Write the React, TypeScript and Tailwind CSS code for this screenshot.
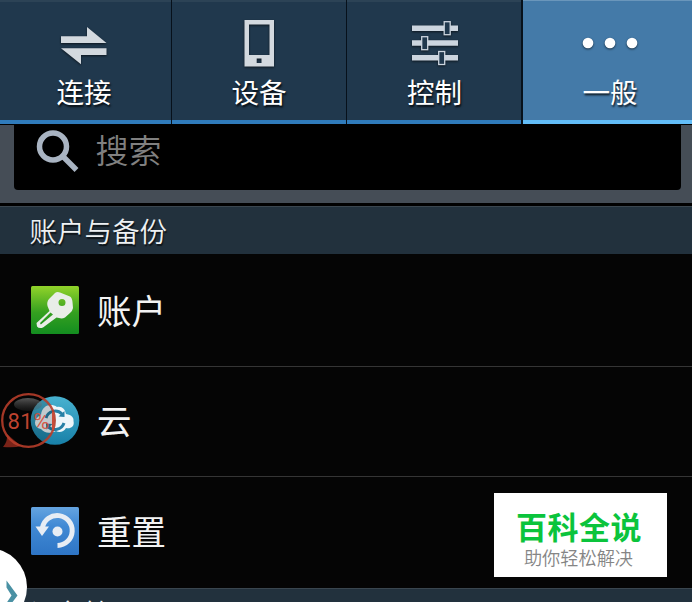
import type { ReactNode } from "react";

const tabShadow = "[filter:drop-shadow(0_1px_1px_rgba(0,0,0,0.6))]";

function ConnectIcon() {
  return (
    <svg width="48" height="48" viewBox="0 0 48 48" className={tabShadow} fill="#d3d9df">
      <path d="M1 16.300H27V7L46.500 23H1Z" />
      <path d="M46.500 28.300H1L21 44.300V35H46.500Z" />
    </svg>
  );
}

function DeviceIcon() {
  return (
    <svg width="48" height="48" viewBox="0 0 48 48" className={tabShadow} fill="#d3d9df">
      <path fillRule="evenodd" d="M9.500 0H39V46.500H9.500ZM14 4.500V35H34.500V4.500ZM21.700 38.500V43H26.500V38.500Z" />
    </svg>
  );
}

function ControlIcon() {
  return (
    <svg width="48" height="48" viewBox="0 0 48 48" className={tabShadow}>
      <path d="M1 5.500H47V11H1ZM1 20.300H47V25.800H1ZM1 35H47V40.500H1Z" fill="#ccd5df" />
      <g fill="#20384d" stroke="#ccd5df" strokeWidth="1.300">
        <rect x="33.200" y="1.700" width="6" height="13" />
        <rect x="10.700" y="16.700" width="6" height="13" />
        <rect x="27.700" y="31.500" width="6" height="13" />
      </g>
    </svg>
  );
}

function MoreIcon() {
  return (
    <svg width="58" height="48" viewBox="0 0 58 48" className={tabShadow} fill="#fff">
      <circle cx="7" cy="23" r="5.300" />
      <circle cx="29" cy="23" r="5.300" />
      <circle cx="51" cy="23" r="5.300" />
    </svg>
  );
}

function Tab({ label, icon, active = false, className = "" }: { label: string; icon: ReactNode; active?: boolean; className?: string }) {
  return (
    <div
      className={
        "flex h-[124px] flex-col items-center border-b-4 pt-5 " +
        (active
          ? "border-b-[#62bdf8] bg-[#447aa8] shadow-[inset_0_1px_0_#6a96bb] "
          : "border-b-[#2f7bbb] bg-[#20384d] shadow-[inset_0_2px_0_#2c4356] ") +
        className
      }
    >
      {icon}
      <span className="mt-[3px] text-[27.5px] leading-[40px] [text-shadow:1px_2px_2px_rgba(0,0,0,0.8)]">{label}</span>
    </div>
  );
}

function SectionHeader({ label }: { label: string }) {
  return (
    <div className="h-[48px] shrink-0 border-t border-t-[#3a464f] bg-[#22313d] pl-[29.5px] text-[27.5px] leading-[46px] font-[350] text-[#eef1f3] [text-shadow:1px_2px_1px_rgba(0,0,0,0.6)]">
      {label}
    </div>
  );
}

function KeyIcon() {
  return (
    <svg width="48" height="48" viewBox="0 0 48 48">
      <defs>
        <linearGradient id="key-bg" x1="0" y1="0" x2="0" y2="1">
          <stop offset="0" stopColor="#92d32a" />
          <stop offset="0.550" stopColor="#35a020" />
          <stop offset="1" stopColor="#138d20" />
        </linearGradient>
      </defs>
      <rect width="48" height="48" rx="1.500" fill="url(#key-bg)" />
      <path
        fillRule="evenodd"
        d="M24 7Q26 5.500 29 6.500L39 10.500Q41 11.500 41.500 16L42 22Q41.500 25 39 27L34 31.500Q31 33 28 32L25.500 31.500L12 41.500Q8 43 6 40.500L5.500 37L18.500 25L16.500 20Q15.500 16 18 13ZM27.500 16.500A3.500 3.500 0 1 0 34.500 16.500A3.500 3.500 0 1 0 27.500 16.500ZM19.500 26.500L9 37L9.800 38.500L22 28.500Z"
        fill="#e9ede8"
      />
    </svg>
  );
}

function CloudIcon() {
  return (
    <svg width="50" height="50" viewBox="0 0 50 50" className="shrink-0">
      <defs>
        <linearGradient id="cloud-bg" x1="0" y1="0" x2="0" y2="1">
          <stop offset="0" stopColor="#48b2d0" />
          <stop offset="1" stopColor="#1880a8" />
        </linearGradient>
      </defs>
      <circle cx="25" cy="25.500" r="24.300" fill="url(#cloud-bg)" />
      <path
        d="M11 34C3 33 3 23 11 20C12 10 21 8 27 12C32 11 35 14 36 19C42 20 44 23 43.500 26C45 32 40 34 36 33C34 37 29 38 26 36C20 39 14 38 11 34Z"
        fill="#eef6fa"
      />
      <g fill="none" stroke="#267fa5" strokeWidth="3">
        <path d="M16 23A9.500 9.500 0 0 1 32 19" />
        <path d="M34 28A9.500 9.500 0 0 1 18 31.500" />
      </g>
      <path d="M28.500 21.500L34.500 22L34.500 16ZM16 28.500L22.500 29L16.500 34.500Z" fill="#267fa5" />
    </svg>
  );
}

function ResetIcon() {
  return (
    <svg width="48" height="48" viewBox="0 0 48 48">
      <defs>
        <linearGradient id="reset-bg" x1="0" y1="0" x2="0" y2="1">
          <stop offset="0" stopColor="#65a4e0" />
          <stop offset="0.400" stopColor="#4089d4" />
          <stop offset="1" stopColor="#2e75c5" />
        </linearGradient>
      </defs>
      <rect width="48" height="48" rx="1.500" fill="url(#reset-bg)" />
      <path d="M11.500 20.500A15 15 0 1 1 26.500 38.500" fill="none" stroke="#e7edf4" strokeWidth="5" />
      <path d="M4.500 19.500H18L11 29Z" fill="#e7edf4" />
      <circle cx="26.500" cy="24.500" r="5" fill="#e7edf4" />
    </svg>
  );
}

function Row({ label, icon, className }: { label: string; icon: ReactNode; className: string }) {
  return (
    <div className={"flex shrink-0 items-center bg-[#050505] " + className}>
      <div className="ml-[31px] flex w-[48px] justify-center">{icon}</div>
      <span className="-mt-[3px] ml-[18px] text-[34.5px] leading-[46px] text-[#f3f3f3]">{label}</span>
    </div>
  );
}

function BatteryBubble() {
  return (
    <svg width="60" height="60" viewBox="0 0 60 60" className="absolute top-[390px] left-0">
      <defs>
        <linearGradient id="bubble-shine" x1="0" y1="0" x2="0" y2="1">
          <stop offset="0" stopColor="#8d8d8d" stopOpacity="0.600" />
          <stop offset="1" stopColor="#444" stopOpacity="0.200" />
        </linearGradient>
      </defs>
      <path d="M7 44Q8 51 3 57Q15 58 21 56Z" fill="#7a2318" />
      <circle cx="28.500" cy="30.500" r="26.300" fill="#000" fillOpacity="0.180" stroke="#b63d2a" strokeWidth="2.300" strokeOpacity="0.900" />
      <ellipse cx="28" cy="14.500" rx="14" ry="6.500" fill="url(#bubble-shine)" />
      <text x="7.500" y="38.500" fontFamily="Roboto, sans-serif" fontSize="22" letterSpacing="0.500" fill="#d84c36" fillOpacity="0.900">
        81%
      </text>
      <path d="M53 22V40" stroke="#c94b38" strokeWidth="2" />
    </svg>
  );
}

export default function App() {
  return (
    <div className="relative flex h-[602px] w-[692px] flex-col overflow-hidden bg-black font-['Noto_Sans_CJK_SC',sans-serif] text-white">
      <div className="grid h-[124px] shrink-0 grid-cols-[171px_174px_174px_169px] gap-x-px bg-[#07111b]">
        <Tab label="连接" icon={<ConnectIcon />} className="pr-[3px]" />
        <Tab label="设备" icon={<DeviceIcon />} />
        <Tab label="控制" icon={<ControlIcon />} className="pl-px" />
        <Tab label="一般" icon={<MoreIcon />} active className="ml-px w-[174px]" />
      </div>

      <div className="h-[79px] shrink-0 border-t border-t-black bg-[#454d56] pr-[11px] pl-[14px]">
        <div className="flex h-[65px] items-center rounded-b-[4px] bg-black pb-3">
          <svg width="44" height="44" viewBox="0 0 44 44" className="ml-[22px]" fill="none" stroke="#a9b4c2">
            <circle cx="17" cy="16.500" r="13.500" strokeWidth="5.500" />
            <path d="M26.500 26L40.500 40" strokeWidth="5.500" />
          </svg>
          <span className="-mt-[5px] ml-[15.5px] text-[33px] leading-[48px] font-[350] text-[#808080]">搜索</span>
        </div>
      </div>

      <div className="mt-[3px] flex flex-col">
        <SectionHeader label="账户与备份" />
        <div className="flex flex-col gap-px bg-[#353535]">
          <Row label="账户" icon={<KeyIcon />} className="h-[112px]" />
          <Row label="云" icon={<CloudIcon />} className="h-[109px] pb-[3px]" />
          <Row label="重置" icon={<ResetIcon />} className="h-[111px] pb-[3px]" />
        </div>
        <SectionHeader label="设备管理器" />
      </div>

      <BatteryBubble />

      <svg width="28" height="58" viewBox="0 0 28 58" className="absolute bottom-0 left-0">
        <circle cx="-12" cy="43" r="39" fill="#fff" />
        <path d="M6.500 36.500L17.500 51.500L6.500 66V59L11.500 51.500L6.500 43.500Z" fill="#4a91a4" />
      </svg>

      <div className="absolute top-[493px] left-[494px] flex h-[84px] w-[173px] flex-col items-center bg-white pt-[13px]">
        <span className="pr-[3px] text-[31px] leading-[40px] font-bold tracking-[0.5px] text-[#0bc43c]">百科全说</span>
        <span className="-mt-px pr-[4px] text-[18.2px] leading-[24px] font-[350] text-[#858585]">助你轻松解决</span>
      </div>
    </div>
  );
}
